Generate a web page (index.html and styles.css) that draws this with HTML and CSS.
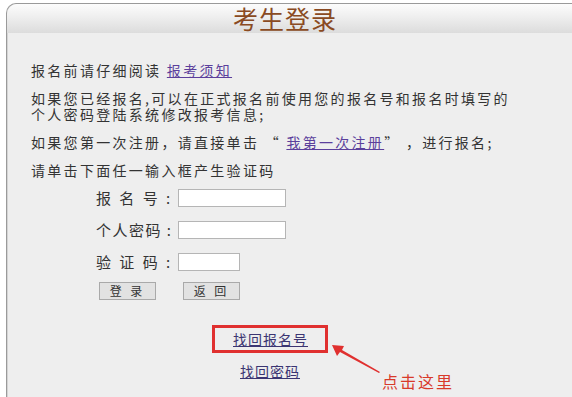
FILE: index.html
```html
<!DOCTYPE html>
<html lang="zh-CN">

<head>
  <meta charset="UTF-8">
  <meta name="viewport" content="width=device-width, initial-scale=1.0">
  <title>考生登录</title>
  <link rel="stylesheet" href="styles.css">
</head>

<body>
  <div class="panel">
    <div class="panel-head">考生登录</div>

    <div class="panel-body">
      <p>报名前请仔细阅读 <a href="#" class="link">报考须知</a></p>
      <p>如果您已经报名,可以在正式报名前使用您的报名号和报名时填写的<br>个人密码登陆系统修改报考信息;</p>
      <p>如果您第一次注册，请直接单击 “ <a href="#" class="link">我第一次注册</a>” ，进行报名;</p>
      <p>请单击下面任一输入框产生验证码</p>

      <!-- Login form -->
      <form class="login-form">
        <label class="spaced">报 名 号 :</label>
        <input type="text" class="field">
        <label>个人密码 :</label>
        <input type="text" class="field">
        <label class="spaced">验 证 码 :</label>
        <input type="text" class="field short">
        <div class="buttons">
          <button type="button" class="btn">登 录</button>
          <button type="button" class="btn">返 回</button>
        </div>
      </form>

      <!-- Recovery links -->
      <div class="recover">
        <a href="#" class="recover-link boxed">找回报名号</a>
        <a href="#" class="recover-link">找回密码</a>

        <svg class="arrow" width="60" height="34" viewBox="0 0 60 34">
          <polygon points="2,3 14,4 12,8 50,30 49,31 10,10 7,14" fill="#e0302f" />
        </svg>
        <span class="hint">点击这里</span>
      </div>
    </div>
  </div>
</body>

</html>
```

FILE: styles.css
```css
body {
  margin: 0;
  background-color: #ffffff;
  font-family: "Noto Sans CJK SC", "Noto Sans", sans-serif;
  color: #333333;
  overflow: hidden;
}

.panel {
  margin: 3px -12px 0 6px;
  height: 420px;
  border: 1px solid #9a9a9a;
  border-bottom: none;
  border-radius: 10px 10px 0 0;
  background-color: #eeeeee;
  box-shadow: inset 1px 0 0 #d4d4d4;
}

.panel-head {
  height: 29px;
  line-height: 29px;
  text-align: center;
  font-size: 25px;
  letter-spacing: 1px;
  color: #8a4a22;
  background: linear-gradient(#fcfcfc, #f0f0f0 40%, #dcdcdc);
  border-radius: 10px 10px 0 0;
  padding-right: 20px;
}

.panel-body {
  padding: 29px 0 0 24px;
  position: relative;
}

p {
  margin: 0 0 12px;
  font-size: 14px;
  line-height: 16px;
  letter-spacing: 2.3px;
}

.link {
  color: #5b3f9c;
}

.login-form {
  display: grid;
  grid-template-columns: 82px auto;
  justify-items: start;
  align-items: center;
  row-gap: 14px;
  margin: -1px 0 0 65px;
  font-size: 15px;
  line-height: 18px;
}

.login-form label {
  letter-spacing: 1.5px;
  white-space: pre;
}

.login-form .spaced {
  letter-spacing: 2.5px;
}

.field {
  width: 104px;
  height: 16px;
  padding: 0 1px;
  border: 1px solid #b5b5b5;
  background-color: #ffffff;
}

.field.short {
  width: 58px;
}

.buttons {
  grid-column: 1 / 3;
  display: flex;
  gap: 27px;
  margin: -3px 0 0 3px;
}

.btn {
  width: 57px;
  height: 18px;
  padding: 0;
  font-family: inherit;
  font-size: 12px;
  line-height: 16px;
  letter-spacing: 3px;
  color: #333333;
  background-color: #e2e2e2;
  border: 1px solid #a9a9a9;
}

.recover {
  position: relative;
  width: 200px;
  margin: 25px 0 0 139px;
  display: flex;
  flex-direction: column;
  align-items: center;
  gap: 7px;
}

.recover-link {
  font-size: 14px;
  line-height: 22px;
  letter-spacing: 1px;
  color: #3b3572;
}

.boxed {
  padding: 0 17px 0 18px;
  border: 3px solid #e0302f;
}

.arrow {
  position: absolute;
  left: 160px;
  top: 17px;
}

.hint {
  position: absolute;
  left: 212px;
  top: 45px;
  white-space: nowrap;
  font-size: 16px;
  line-height: 22px;
  letter-spacing: 2px;
  color: #d83a2a;
}
```
